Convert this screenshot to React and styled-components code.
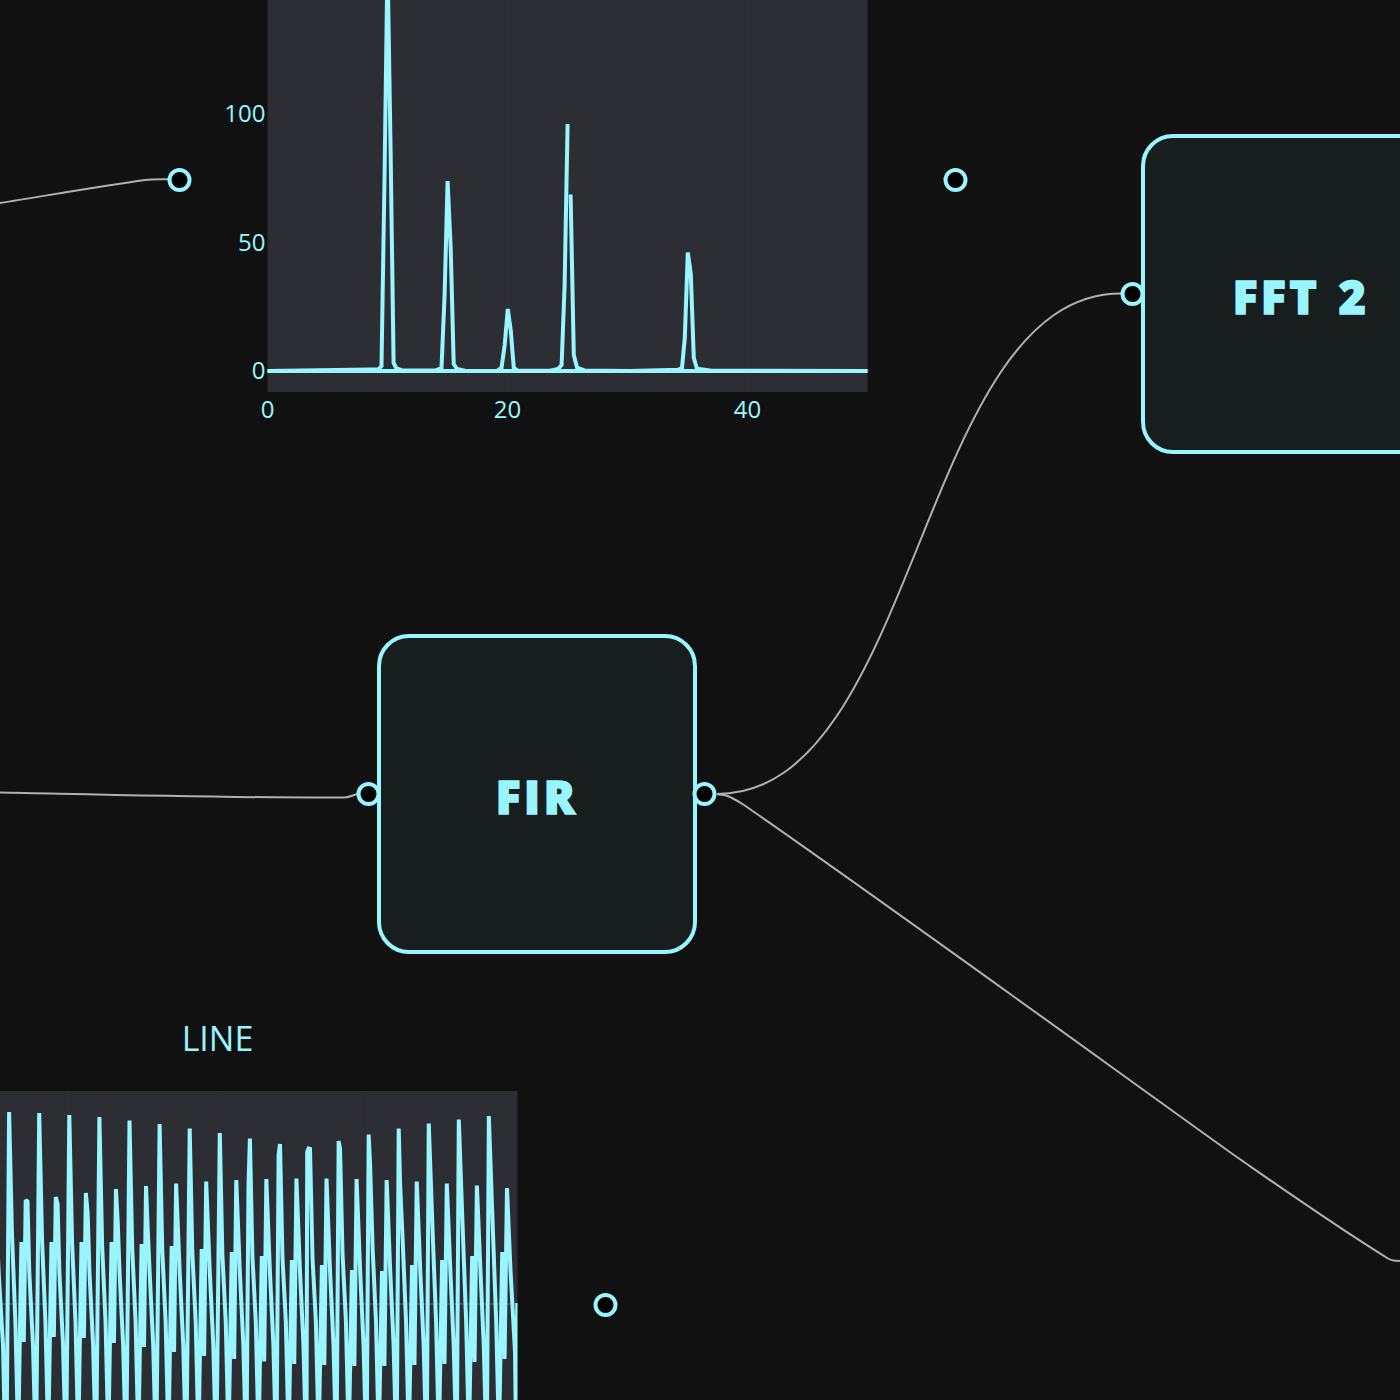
import React from "react";
import styled, { createGlobalStyle } from "styled-components";

const CYAN = "#99f5ff";

const Global = createGlobalStyle`
  html, body { margin: 0; background: #111111; overflow: hidden; }
  body { font-family: "Open Sans", "Noto Sans", sans-serif; }
`;

const Canvas = styled.main`
  position: relative;
  width: 1400px;
  height: 1400px;
  overflow: hidden;
  background: #111111;
`;

const Wires = styled.svg`
  position: absolute;
  inset: 0;
  fill: none;
  stroke: #b1b1b1;
  stroke-width: 2;
`;

const Block = styled.section`
  position: absolute;
  left: ${(p) => p.$x}px;
  top: ${(p) => p.$y}px;
  box-sizing: border-box;
  width: 320px;
  height: 320px;
  border: 4px solid ${CYAN};
  border-radius: 32px;
  background: #181d1d;
  display: flex;
  align-items: center;
  justify-content: center;
`;

const BlockLabel = styled.span`
  color: ${CYAN};
  font-size: 46px;
  font-weight: 800;
  line-height: 64px;
  letter-spacing: 3.6px;
  word-spacing: 3px;
  -webkit-text-stroke: 1.6px ${CYAN};
  white-space: nowrap;
  padding-top: 4px;
`;

const Port = styled.i`
  position: absolute;
  left: ${(p) => p.$x}px;
  top: ${(p) => p.$y}px;
  box-sizing: border-box;
  width: 24px;
  height: 24px;
  transform: translate(-12.5px, -12px);
  border: 4px solid ${CYAN};
  border-radius: 50%;
  background: #000;
`;

const ChartNode = styled.section`
  position: absolute;
  left: ${(p) => p.$x}px;
  top: ${(p) => p.$y}px;
`;

const Plot = styled.svg`
  display: block;
  overflow: visible;
  font-family: "Open Sans", "Noto Sans", sans-serif;
`;

const Tick = styled.text`
  font-size: 24px;
  fill: ${CYAN};
`;

const Title = styled.text`
  font-size: 34px;
  fill: ${CYAN};
`;

const Trace = styled.path`
  fill: none;
  stroke: ${CYAN};
  stroke-width: 4;
  stroke-miterlimit: 2;
`;

const SPECTRUM_LOW = [
  [267.5, 371], [370, 369.6], [378.5, 369.6], [381.5, 366], [384.5, 180], [387.5, -40], [390.6, 150], [393.6, 363],
  [396.5, 368.5], [403, 370.6], [435, 370.6], [441.5, 368], [444.6, 295], [447.6, 181], [450.7, 248], [453.7, 364],
  [457, 369], [465, 370.8], [497, 371], [501.5, 368], [504.7, 345], [507.8, 309], [510.8, 331], [513.8, 368],
  [518, 370.8], [550, 370.8], [558, 369], [561.6, 365], [564.6, 286], [567.6, 124],
];
const SPECTRUM_HIGH = [
  [570.6, 194.5], [573.8, 355], [577, 367.5], [585, 370.6], [630, 371], [678, 369.8], [682, 368], [684.8, 338],
  [687.8, 252.5], [690.8, 274], [693.8, 358], [697, 368.8], [712, 370.8], [867.5, 371],
];

const CREST = [1112, 1113, 1115, 1117, 1120.5, 1124, 1128.5, 1133, 1138.5, 1144, 1148.5, 1141, 1134.5, 1128.5, 1123.5, 1119.5, 1116];
const SECOND = [1200, 1197, 1193, 1189, 1186, 1183.5, 1181.5, 1180, 1179, 1178.5, 1178.5, 1179, 1180, 1181.5, 1183.5, 1185.5, 1188];
const STEP = [1242, 1242, 1242, 1242, 1244, 1246, 1249, 1252, 1256, 1260, 1265, 1270, 1271, 1265, 1260, 1256, 1252];
const DIP = [1342, 1337, 1338, 1343, 1347, 1352, 1356, 1359, 1361.5, 1364, 1365, 1366, 1366, 1365, 1364, 1362, 1359];
const SHOULDER = [1235, 1240, 1243, 1246, 1248, 1250, 1252, 1254, 1256, 1257, 1258, 1254, 1248, 1240, 1234, 1230, 1228];
const EXTRA_SECOND = { 0: 1201.5, 1: 1204, 2: 1213, 3: 1222, 4: 1231 };
const EXTRA_BEFORE = { 8: 1185, 9: 1155, 10: 1152 };
const EXTRA_AFTER = { 10: 1149, 11: 1149, 12: 1164, 13: 1184 };

function waveform() {
  const pts = [[-4.5, 1205], [-1.2, 1275], [3, 1345], [6.2, 1490]];
  CREST.forEach((crest, p) => {
    const x = p < 10 ? 9.1 + 30.1 * p : 308.6 + 30.04 * (p - 10);
    const base = 9 + 30.05 * p;
    if (EXTRA_BEFORE[p]) pts.push([x - 1.4, EXTRA_BEFORE[p]]);
    pts.push([x, crest]);
    if (EXTRA_AFTER[p]) pts.push([x + 1.4, EXTRA_AFTER[p]]);
    pts.push([base + 3, SHOULDER[p]], [base + 6.4, 1322], [base + 9.2, 1440]);
    pts.push([base + 12.4, STEP[p]], [base + 14.8, DIP[p]]);
    const sx = 25.7 + 30.08 * p;
    pts.push([sx, SECOND[p]]);
    if (EXTRA_SECOND[p]) pts.push([sx + 1.8, EXTRA_SECOND[p]]);
    pts.push([sx + 3.6, 1272]);
    if (p < 16) pts.push([base + 24, 1345], [base + 27, 1460]);
    else pts.push([515, 1352], [516.7, 1490], [517.2, 1303]);
  });
  return pts;
}

const toPath = (pts) => "M" + pts.map(([x, y]) => `${x.toFixed(2)},${y}`).join("L");

function SpectrumChart() {
  return (
    <ChartNode $x={0} $y={0}>
      <Plot width="900" height="430">
        <rect x="267.5" y="0" width="600" height="392" fill="#2d2e33" />
        <path d="M507.5 0V392M747.5 0V392" stroke="#2f3035" strokeWidth="2" />
        <Trace d="M267.5 371H867.5" />
        <Trace d={toPath(SPECTRUM_LOW)} />
        <Trace d={toPath(SPECTRUM_HIGH)} />
        {[[100, 122], [50, 251], [0, 379]].map(([v, y]) => (
          <Tick key={v} x="265.5" y={y} textAnchor="end">{v}</Tick>
        ))}
        {[[0, 267.5], [20, 507.5], [40, 747.5]].map(([v, x]) => (
          <Tick key={v} x={x} y="418" textAnchor="middle">{v}</Tick>
        ))}
      </Plot>
    </ChartNode>
  );
}

function LineChart() {
  return (
    <ChartNode $x={0} $y={1000}>
      <Plot width="517.5" height="400" viewBox="0 1000 517.5 400">
        <defs>
          <clipPath id="line-plot">
            <rect x="0" y="1091" width="517.5" height="309" />
          </clipPath>
        </defs>
        <Title x="217.5" y="1051.4" textAnchor="middle">LINE</Title>
        <rect x="0" y="1091" width="517.5" height="309" fill="#2d2e33" />
        <path d="M67.5 1091V1400M217.5 1091V1400M367.5 1091V1400" stroke="#2f3035" strokeWidth="2" />
        <path d="M0 1304H517.5" stroke="#3c4a50" strokeWidth="2" />
        <g clipPath="url(#line-plot)">
          <Trace d={toPath(waveform())} />
        </g>
      </Plot>
    </ChartNode>
  );
}

export default function App() {
  return (
    <>
      <Global />
      <Canvas>
        <Wires width="1400" height="1400">
          <path d="M0 203C50 195 105 185.5 145 180Q153 179 168 179.3" />
          <path d="M0 792.5C120 795 230 798 344 797.5Q348 797.5 357 794" />
          <path d="M717 794C919 794 919 293.5 1121 293.5" />
          <path d="M717 794.2Q726 794.7 731 797.5Q737 800.5 744 805C880 899 1100 1059 1240 1159.3C1290 1194 1340 1229 1388 1258.5Q1391.5 1260.8 1400 1261" />
        </Wires>
        <SpectrumChart />
        <LineChart />
        <Block $x={377} $y={634}>
          <BlockLabel>FIR</BlockLabel>
        </Block>
        <Block $x={1141} $y={133.5}>
          <BlockLabel>FFT 2</BlockLabel>
        </Block>
        <Port $x={180} $y={180} />
        <Port $x={956} $y={180} />
        <Port $x={369} $y={794} />
        <Port $x={705} $y={794} />
        <Port $x={1133} $y={293.5} />
        <Port $x={606} $y={1304.5} />
      </Canvas>
    </>
  );
}
